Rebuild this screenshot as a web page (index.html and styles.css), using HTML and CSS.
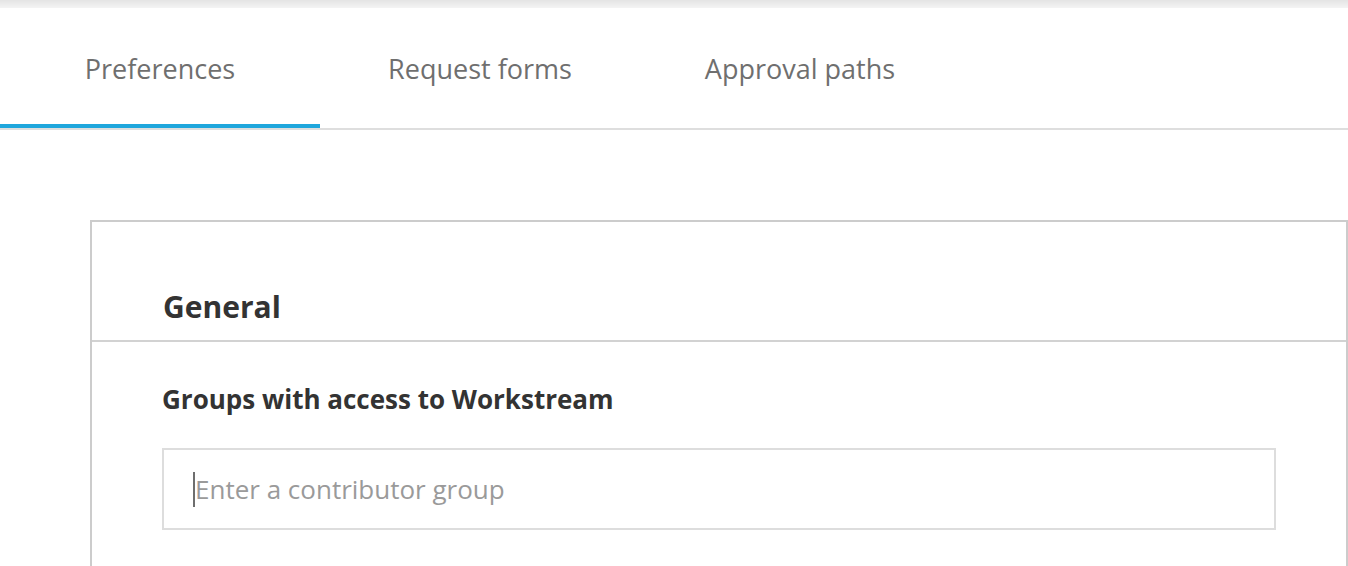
FILE: index.html
```html
<!DOCTYPE html>
<html lang="en">
<head>
<meta charset="utf-8">
<title>Workstream settings</title>
<link rel="stylesheet" href="styles.css">
</head>
<body>
<div class="topshade"></div>
<nav class="tabs">
  <div class="tab active">Preferences</div>
  <div class="tab">Request forms</div>
  <div class="tab">Approval paths</div>
</nav>
<main class="content">
  <section class="card">
    <header class="card-head">
      <h2 class="card-title">General</h2>
    </header>
    <div class="card-body">
      <label class="field-label" for="grp">Groups with access to Workstream</label>
      <div class="input-wrap">
        <input id="grp" class="text-input" type="text" placeholder="Enter a contributor group">
      </div>
    </div>
  </section>
</main>
</body>
</html>
```

FILE: styles.css
```css
* { box-sizing: border-box; }
html, body { margin: 0; padding: 0; background: #fff; }
body {
  font-family: "Open Sans", "Liberation Sans", sans-serif;
  overflow: hidden;
  height: 566px;
}
.topshade {
  height: 8px;
  background: linear-gradient(#e4e4e4, #f4f4f4);
}
.tabs {
  display: flex;
  border-bottom: 2px solid #dedede;
}
.tab {
  width: 320px;
  height: 120px;
  display: flex;
  align-items: center;
  justify-content: center;
  font-size: 27px;
  color: #6f6f6f;
  border-bottom: 4px solid transparent;
  padding-top: 4px;
}
.tab.active {
  border-bottom-color: #1fa6dc;
}
.content {
  padding: 90px 0 0 90px;
}
.card {
  border: 2px solid #cccccc;
  border-bottom: none;
  height: 346px;
}
.card-head {
  height: 120px;
  display: flex;
  align-items: flex-end;
  padding: 0 0 14px 71px;
  border-bottom: 2px solid #d2d2d2;
}
.card-title {
  margin: 0;
  font-size: 30px;
  line-height: 39px;
  font-weight: 700;
  color: #333;
}
.card-body {
  padding: 41px 70px 0 70px;
  display: flex;
  flex-direction: column;
  gap: 33px;
}
.field-label {
  font-size: 26px;
  line-height: 32px;
  font-weight: 700;
  color: #333;
}
.input-wrap {
  position: relative;
}
.input-wrap::before {
  content: "";
  position: absolute;
  left: 31px;
  top: 24px;
  width: 2px;
  height: 35px;
  background: #6e6e6e;
}
.text-input {
  display: block;
  width: 100%;
  height: 82px;
  border: 2px solid #dddddd;
  padding: 0 30px 0 31px;
  font-family: "Open Sans", "Liberation Sans", sans-serif;
  font-size: 26px;
  color: #333;
  outline: none;
  background: #fff;
}
.text-input::placeholder {
  color: #9a9a9a;
}
```
